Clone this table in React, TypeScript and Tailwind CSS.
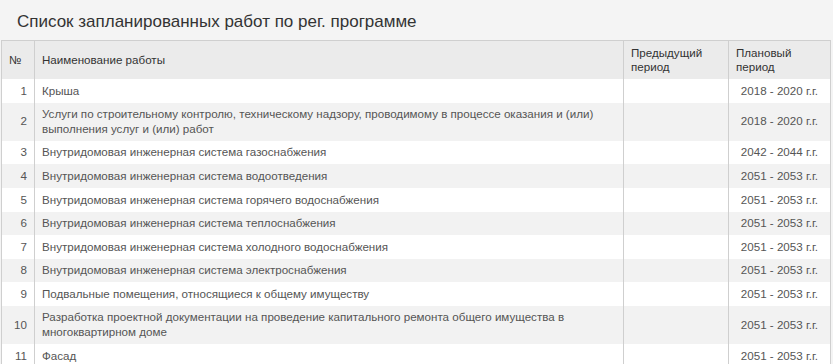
import React from 'react';

type Work = { n: number; name: string; prev: string; plan: string };

const works: Work[] = [
  { n: 1, name: 'Крыша', prev: '', plan: '2018 - 2020 г.г.' },
  {
    n: 2,
    name: 'Услуги по строительному контролю, техническому надзору, проводимому в процессе оказания и (или) выполнения услуг и (или) работ',
    prev: '',
    plan: '2018 - 2020 г.г.',
  },
  { n: 3, name: 'Внутридомовая инженерная система газоснабжения', prev: '', plan: '2042 - 2044 г.г.' },
  { n: 4, name: 'Внутридомовая инженерная система водоотведения', prev: '', plan: '2051 - 2053 г.г.' },
  { n: 5, name: 'Внутридомовая инженерная система горячего водоснабжения', prev: '', plan: '2051 - 2053 г.г.' },
  { n: 6, name: 'Внутридомовая инженерная система теплоснабжения', prev: '', plan: '2051 - 2053 г.г.' },
  { n: 7, name: 'Внутридомовая инженерная система холодного водоснабжения', prev: '', plan: '2051 - 2053 г.г.' },
  { n: 8, name: 'Внутридомовая инженерная система электроснабжения', prev: '', plan: '2051 - 2053 г.г.' },
  { n: 9, name: 'Подвальные помещения, относящиеся к общему имуществу', prev: '', plan: '2051 - 2053 г.г.' },
  {
    n: 10,
    name: 'Разработка проектной документации на проведение капитального ремонта общего имущества в многоквартирном доме',
    prev: '',
    plan: '2051 - 2053 г.г.',
  },
  { n: 11, name: 'Фасад', prev: '', plan: '2051 - 2053 г.г.' },
];

const cell = 'border-l border-r border-[#cfcfcf] px-[7px] py-[4.55px] align-middle';

export default function App() {
  return (
    <div className="min-h-screen bg-[#f4f4f4] font-['Liberation_Sans',Arial,sans-serif] text-[11.6px] leading-[14.5px]">
      <h2 className="pl-[17px] pt-[11px] pb-[8px] text-[17px] leading-[21px] text-[#333]">
        Список запланированных работ по рег. программе
      </h2>
      <table className="ml-[1px] w-[830px] border-collapse border-t border-[#cfcfcf] table-fixed">
        <colgroup>
          <col className="w-[33px]" />
          <col className="w-[589px]" />
          <col className="w-[105px]" />
          <col />
        </colgroup>
        <thead>
          <tr className="bg-[#ebebeb] text-[#333]">
            <th className={`${cell} text-left font-normal`}>№</th>
            <th className={`${cell} text-left font-normal`}>Наименование работы</th>
            <th className={`${cell} text-left font-normal`}>
              Предыдущий
              <br />
              период
            </th>
            <th className={`${cell} text-left font-normal`}>
              Плановый
              <br />
              период
            </th>
          </tr>
        </thead>
        <tbody className="text-[#555]">
          {works.map((w, i) => (
            <tr key={w.n} className={i % 2 === 0 ? 'bg-white' : 'bg-[#f2f2f2]'}>
              <td className={`${cell} text-right`}>{w.n}</td>
              <td className={cell}>{w.name}</td>
              <td className={cell}>{w.prev}</td>
              <td className={`${cell} text-right pr-[12px]`}>{w.plan}</td>
            </tr>
          ))}
        </tbody>
      </table>
    </div>
  );
}
